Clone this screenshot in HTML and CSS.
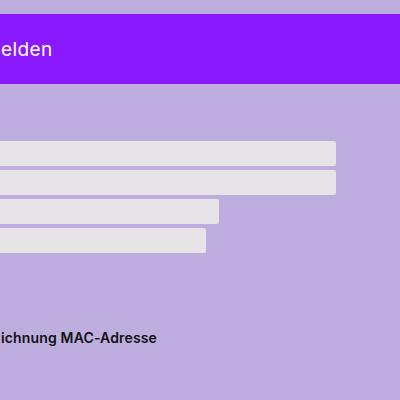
FILE: index.html
```html
<!DOCTYPE html>
<html lang="de">
<head>
<meta charset="utf-8">
<title>Anmelden</title>
<link rel="stylesheet" href="styles.css">
</head>
<body>
<div class="page">
  <header class="topbar"><h1 class="title">elden</h1></header>
  <div class="fields">
    <div class="bar bar-long"></div>
    <div class="bar bar-long"></div>
    <div class="bar bar-mid"></div>
    <div class="bar bar-short"></div>
  </div>
  <p class="label">ichnung MAC-Adresse</p>
</div>
</body>
</html>
```
FILE: styles.css
```css
html, body {
  margin: 0;
  padding: 0;
  background: #bdaedf;
  overflow: hidden;
}
.page {
  width: 400px;
  height: 400px;
  font-family: Inter, "Open Sans", sans-serif;
  display: flex;
  flex-direction: column;
}
.topbar {
  margin-top: 14px;
  height: 70px;
  background: #8a19ff;
  display: flex;
  align-items: center;
}
.title {
  margin: 0 0 0 1px;
  font-size: 19px;
  font-weight: 400;
  letter-spacing: 0.4px;
  color: #ffffff;
  white-space: nowrap;
}
.fields {
  margin-top: 57px;
  display: flex;
  flex-direction: column;
  gap: 4px;
}
.bar {
  height: 25px;
  background: #e6e4e6;
  border-radius: 0 2px 2px 0;
}
.bar-long { width: 336px; }
.bar-mid { width: 219px; }
.bar-short { width: 206px; }
.label {
  margin: 76px 0 0 1px;
  font-size: 14px;
  font-weight: 600;
  letter-spacing: 0.15px;
  color: #111111;
  white-space: nowrap;
}
```
